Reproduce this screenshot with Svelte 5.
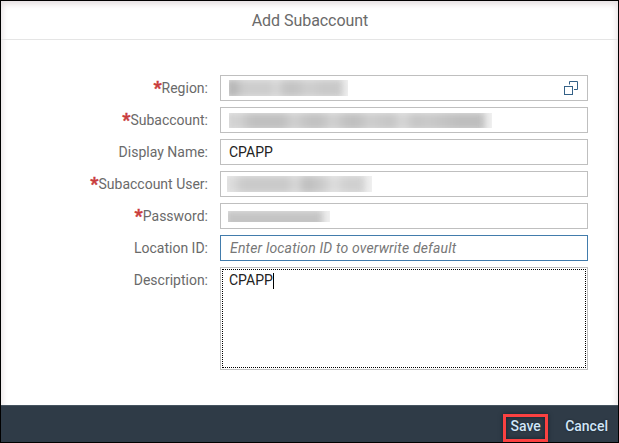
<script>
  const fields = [
    { label: 'Region:', required: true, mask: 'region', help: true },
    { label: 'Subaccount:', required: true, mask: 'account' },
    { label: 'Display Name:', value: 'CPAPP' },
    { label: 'Subaccount User:', required: true, mask: 'user' },
    { label: 'Password:', required: true, mask: 'password' },
    { label: 'Location ID:', placeholder: 'Enter location ID to overwrite default', active: true },
    { label: 'Description:', value: 'CPAPP', area: true }
  ];
</script>

<div class="dialog">
  <header><span>Add Subaccount</span></header>
  <main>
    {#each fields as f}
      <div class="row">
        <div class="label">{#if f.required}<b>*</b>{/if}<span>{f.label}</span></div>
        {#if f.area}
          <div class="field area"><div class="focus"><span class="value">{f.value}</span><i class="caret"></i></div></div>
        {:else}
          <div class="field" class:active={f.active}>
            {#if f.mask}<div class="mask {f.mask}"><div class="smudge"></div></div>{/if}
            {#if f.value}<span class="value">{f.value}</span>{/if}
            {#if f.placeholder}<span class="placeholder">{f.placeholder}</span>{/if}
            {#if f.help}
              <svg class="help" width="16" height="16" viewBox="0 0 16 16" fill="none" stroke="#346187">
                <path d="M6.5 4.5V1.5H14.5V9.5H11" />
                <rect x="1.5" y="6.5" width="8" height="8" />
              </svg>
            {/if}
          </div>
        {/if}
      </div>
    {/each}
  </main>
  <footer>
    <div class="button save"><span>Save</span></div>
    <div class="button cancel"><span>Cancel</span></div>
  </footer>
</div>

<style>
  .dialog {
    box-sizing: border-box;
    width: 619px;
    height: 443px;
    border: 1px solid #000;
    background: #fff;
    box-shadow: inset 0 2px 6px 1px #e2dcde;
    display: flex;
    flex-direction: column;
    font-family: Roboto, "Liberation Sans", sans-serif;
    font-size: 14px;
    color: #6a6a6a;
    overflow: hidden;
    white-space: nowrap;
  }
  header {
    box-sizing: border-box;
    height: 39px;
    flex: none;
    border-bottom: 1px solid #e5e5e5;
    display: flex;
    justify-content: center;
    padding-left: 1px;
    font-size: 16px;
    line-height: 39px;
    letter-spacing: -0.05px;
  }
  main {
    flex: 1;
    min-height: 0;
    padding: 35px 30px 0 0;
    display: flex;
    flex-direction: column;
    gap: 6px;
  }
  .row { display: flex; justify-content: flex-end; align-items: flex-start; gap: 12px; }
  .label { height: 26px; line-height: 27px; display: flex; }
  .label b { color: #c93c3c; font-size: 18px; line-height: 26px; -webkit-text-stroke: 0.4px #c93c3c; }
  .field {
    box-sizing: border-box;
    width: 368px;
    height: 26px;
    border: 1px solid #bfbfbf;
    background: #fff;
    display: flex;
    align-items: center;
    padding-left: 8px;
    line-height: 24px;
  }
  .active { border-color: #427cac; }
  .value { color: #222; }
  .placeholder { font-style: italic; color: #777; letter-spacing: 0.17px; padding-left: 1px; }
  .help { margin: 0 8px 0 auto; }
  .area { height: 103px; padding: 1px; align-items: stretch; }
  .focus {
    flex: 1;
    border: 1px dotted #000;
    padding-left: 6px;
    display: flex;
    line-height: 20px;
  }
  .caret { width: 1px; height: 16px; margin-top: 3px; background: #000; }
  .mask { overflow: hidden; background: #f0f0f0; }
  .smudge { height: 19px; margin: -1px 0 0 -3px; filter: blur(3.5px); }
  .region { width: 119px; height: 16px; }
  .region .smudge { width: 117px; background: linear-gradient(90deg, #b6b6b6 0 7%, #cdcdcd 15% 38%, #dadada 43%, #c4c4c4 50% 60%, #cfcfcf 70%, #c9c9c9 82% 100%); }
  .account { width: 263px; height: 15px; }
  .account .smudge { width: 259px; background: linear-gradient(90deg, #d2d2d2 0 5%, #c0c0c0 10% 22%, #d1d1d1 26%, #c2c2c2 32% 37%, #d2d2d2 41%, #c0c0c0 47% 51%, #cecece 55%, #c5c5c5 64%, #d8d8d8 68%, #c5c5c5 73%, #cacaca 78%, #bebebe 90% 100%); }
  .user { width: 145px; height: 16px; margin-left: -2px; }
  .user .smudge { width: 141px; background: linear-gradient(90deg, #dedede 0 5%, #cacaca 13% 45%, #dadada 51%, #c0c0c0 57% 61%, #cfcfcf 72%, #dfdfdf 78%, #d0d0d0 86% 100%); }
  .password { width: 102px; height: 11px; margin-left: -1px; }
  .password .smudge { width: 98px; background: #c4c4c4; }
  footer {
    box-sizing: border-box;
    height: 37px;
    flex: none;
    border-top: 1px solid #465460;
    background: #2f3b47;
    display: flex;
    justify-content: flex-end;
    align-items: flex-end;
    padding-right: 10px;
    gap: 17px;
    color: #d1e5f7;
    font-weight: 500;
    text-shadow: 0 0 2px #17212b;
  }
  .button { height: 28px; line-height: 24px; }
  .save {
    box-sizing: border-box;
    width: 45px;
    border: 3px solid #fb4141;
    line-height: 18px;
    display: flex;
    justify-content: center;
    box-shadow: 0 0 4px #17212b, inset 0 0 4px #17212b;
  }
</style>
